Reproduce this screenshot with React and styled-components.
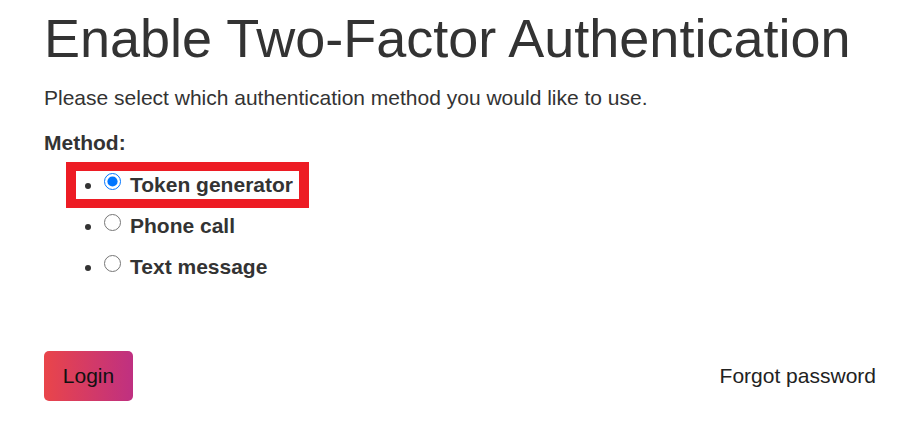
import styled, { createGlobalStyle } from 'styled-components'

const GlobalStyle = createGlobalStyle`
  body {
    margin: 0;
    background: #fff;
    font-family: "Liberation Sans", Arial, sans-serif;
    color: #333;
  }
`

const methods = [
  { id: 'token', label: 'Token generator' },
  { id: 'phone', label: 'Phone call' },
  { id: 'sms', label: 'Text message' },
]

function App() {
  return (
    <Page>
      <GlobalStyle />
      <Title>Enable Two-Factor Authentication</Title>
      <Intro>Please select which authentication method you would like to use.</Intro>
      <Form>
        <FieldLabel>Method:</FieldLabel>
        <MethodList>
          {methods.map((m, i) => (
            <MethodItem key={m.id} $highlight={i === 0}>
              <Radio type="radio" name="method" value={m.id} defaultChecked={i === 0} />
              <MethodName>{m.label}</MethodName>
            </MethodItem>
          ))}
        </MethodList>
        <Actions>
          <LoginButton type="button">Login</LoginButton>
          <ForgotLink href="#">Forgot password</ForgotLink>
        </Actions>
      </Form>
    </Page>
  )
}

const Page = styled.div`
  padding: 0 40px 0 44px;
`

const Title = styled.h1`
  margin: 0;
  padding-top: 7px;
  font-size: 54px;
  font-weight: 400;
  line-height: 62px;
  color: #333;
  white-space: nowrap;
`

const Intro = styled.p`
  margin: 17px 0 0;
  font-size: 21px;
  line-height: 24px;
`

const Form = styled.form`
  margin-top: 21px;
`

const FieldLabel = styled.div`
  font-size: 21px;
  font-weight: 700;
  line-height: 24px;
`

const MethodList = styled.ul`
  margin: 18px 0 0;
  padding-left: 60px;
  font-size: 21px;
`

const MethodItem = styled.li`
  line-height: 24px;
  position: relative;
  width: max-content;

  & + & {
    margin-top: 17px;
  }

  &::after {
    content: '';
    display: ${p => (p.$highlight ? 'block' : 'none')};
    position: absolute;
    left: -38px;
    right: -16px;
    top: -11px;
    bottom: -11px;
    border: solid #ed1c24;
    border-width: 9px 10px;
  }
`

const Radio = styled.input`
  margin: 0 9px 0 0;
  width: 17px;
  height: 17px;
  vertical-align: top;
`

const MethodName = styled.span`
  font-weight: 700;
  color: #333;
`

const Actions = styled.div`
  display: flex;
  justify-content: space-between;
  align-items: center;
  margin-top: 72px;
`

const LoginButton = styled.button`
  width: 89px;
  height: 50px;
  padding: 0;
  border: none;
  border-radius: 5px;
  background: linear-gradient(90deg, #e9454a, #bf3081);
  font-family: "Liberation Sans", Arial, sans-serif;
  font-size: 21px;
  color: #111;
`

const ForgotLink = styled.a`
  font-size: 21px;
  color: #222;
  text-decoration: none;
`

export default App
